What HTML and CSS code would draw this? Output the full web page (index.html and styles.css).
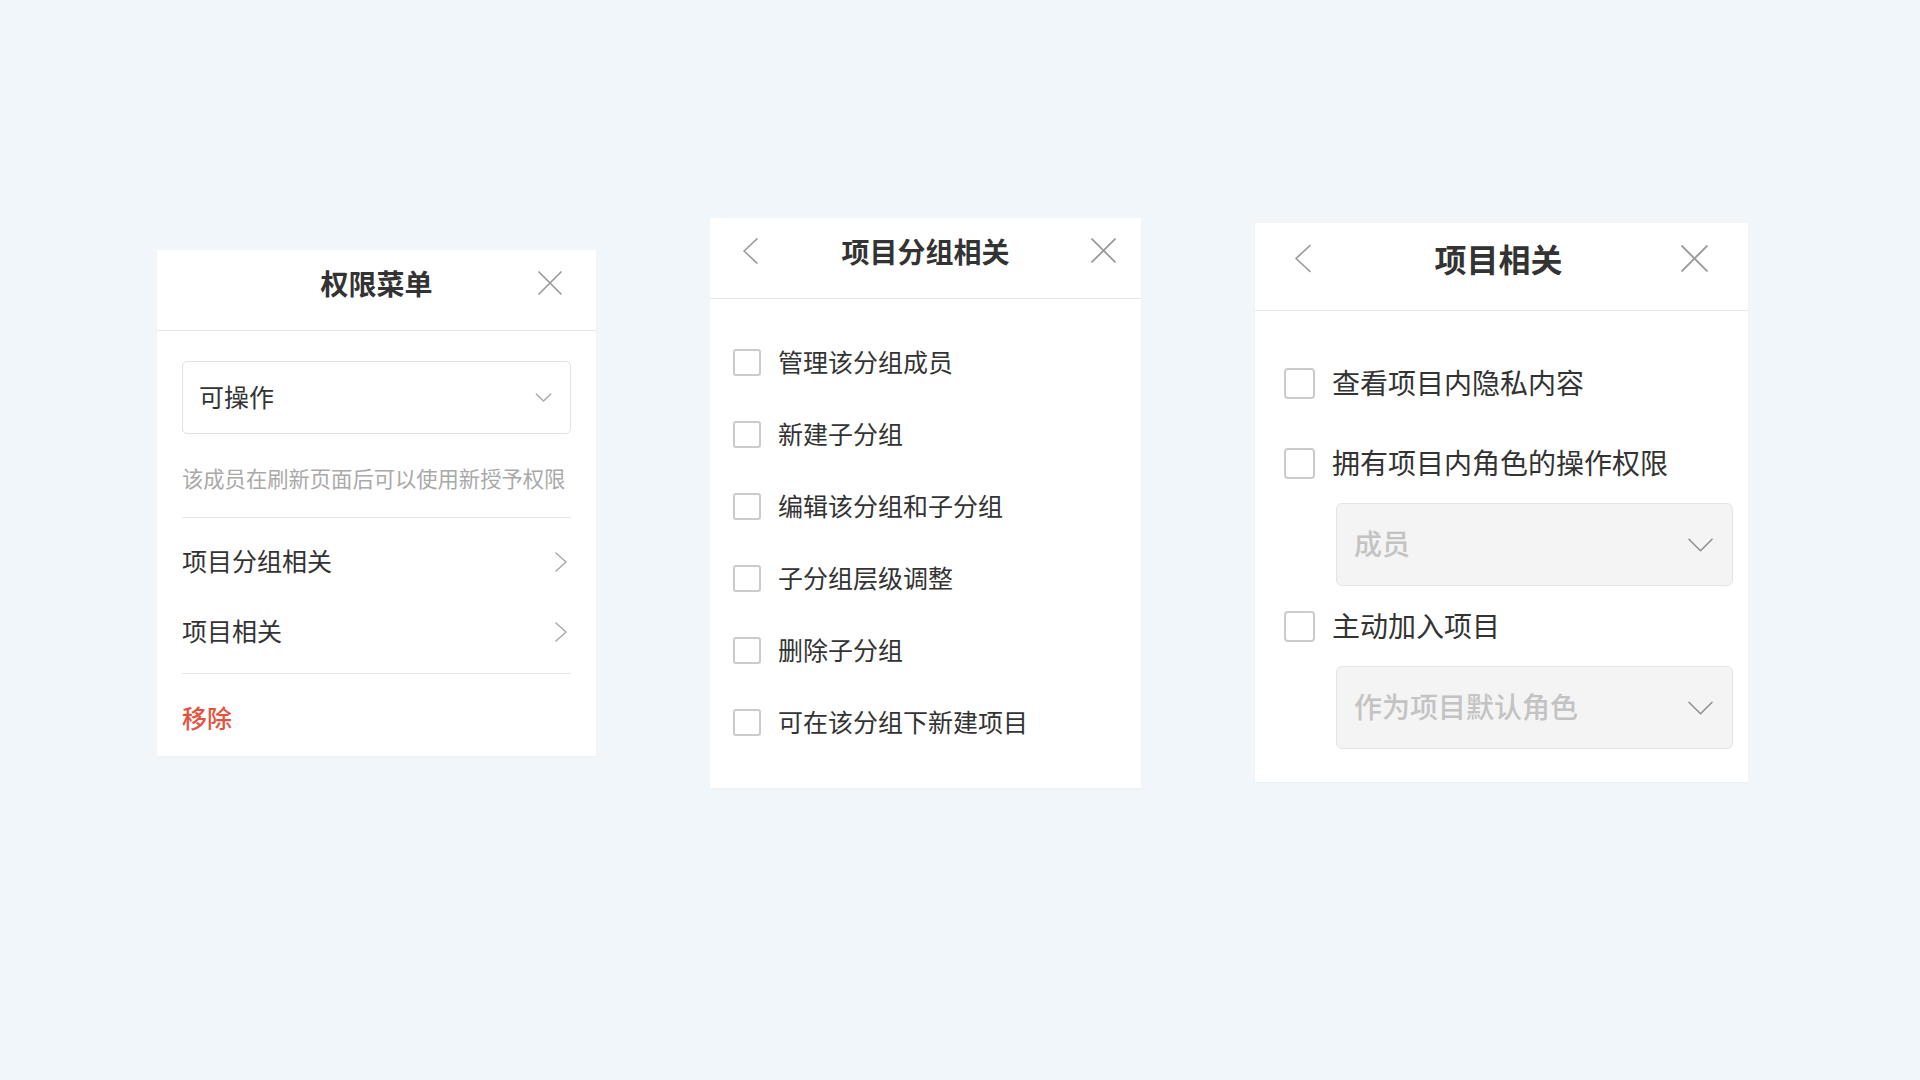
FILE: index.html
```html
<!DOCTYPE html>
<html lang="zh-CN">
<head>
<meta charset="utf-8">
<title>权限菜单</title>
<link rel="stylesheet" href="styles.css">
</head>
<body>
<main class="canvas">

  <section class="panel panel-menu">
    <header class="panel-head">
      <span class="head-left"></span>
      <h2 class="panel-title">权限菜单</h2>
      <span class="head-right">
        <svg class="icon-close" viewBox="0 0 24 24"><path d="M1 1 L23 23 M23 1 L1 23"/></svg>
      </span>
    </header>
    <div class="menu-body">
      <div class="select">
        <span class="select-text">可操作</span>
        <svg class="icon-down" viewBox="0 0 18 10"><polyline points="1,1 9,9 17,1"/></svg>
      </div>
      <p class="hint">该成员在刷新页面后可以使用新授予权限</p>
      <ul class="menu-list">
        <li class="menu-item"><span class="label">项目分组相关</span><svg class="icon-right" viewBox="0 0 12 20"><polyline points="1,1 11,10 1,19"/></svg></li>
        <li class="menu-item"><span class="label">项目相关</span><svg class="icon-right" viewBox="0 0 12 20"><polyline points="1,1 11,10 1,19"/></svg></li>
      </ul>
      <div class="remove">移除</div>
    </div>
  </section>

  <section class="panel panel-group">
    <header class="panel-head">
      <span class="head-left">
        <svg class="icon-back" viewBox="0 0 16 28"><polyline points="15,1 1,14 15,27"/></svg>
      </span>
      <h2 class="panel-title">项目分组相关</h2>
      <span class="head-right">
        <svg class="icon-close" viewBox="0 0 24 24"><path d="M1 1 L23 23 M23 1 L1 23"/></svg>
      </span>
    </header>
    <ul class="check-list">
      <li class="check-row"><span class="checkbox"></span><span class="label">管理该分组成员</span></li>
      <li class="check-row"><span class="checkbox"></span><span class="label">新建子分组</span></li>
      <li class="check-row"><span class="checkbox"></span><span class="label">编辑该分组和子分组</span></li>
      <li class="check-row"><span class="checkbox"></span><span class="label">子分组层级调整</span></li>
      <li class="check-row"><span class="checkbox"></span><span class="label">删除子分组</span></li>
      <li class="check-row"><span class="checkbox"></span><span class="label">可在该分组下新建项目</span></li>
    </ul>
  </section>

  <section class="panel panel-project">
    <header class="panel-head">
      <span class="head-left">
        <svg class="icon-back" viewBox="0 0 16 28"><polyline points="15,1 1,14 15,27"/></svg>
      </span>
      <h2 class="panel-title">项目相关</h2>
      <span class="head-right">
        <svg class="icon-close" viewBox="0 0 24 24"><path d="M1 1 L23 23 M23 1 L1 23"/></svg>
      </span>
    </header>
    <div class="check-list">
      <div class="check-row"><span class="checkbox"></span><span class="label">查看项目内隐私内容</span></div>
      <div class="check-row"><span class="checkbox"></span><span class="label">拥有项目内角色的操作权限</span></div>
      <div class="select select-disabled">
        <span class="select-text">成员</span>
        <svg class="icon-down" viewBox="0 0 26 14"><polyline points="1,1 13,13 25,1"/></svg>
      </div>
      <div class="check-row"><span class="checkbox"></span><span class="label">主动加入项目</span></div>
      <div class="select select-disabled">
        <span class="select-text">作为项目默认角色</span>
        <svg class="icon-down" viewBox="0 0 26 14"><polyline points="1,1 13,13 25,1"/></svg>
      </div>
    </div>
  </section>

</main>
</body>
</html>
```

FILE: styles.css
```css
* {
  box-sizing: border-box;
}

html, body {
  margin: 0;
  padding: 0;
}

body {
  width: 1920px;
  height: 1080px;
  background: #f1f6fa;
  font-family: "Noto Sans CJK SC", "Noto Sans", sans-serif;
  color: #333333;
  overflow: hidden;
}

.canvas {
  height: 1080px;
  display: flex;
  align-items: center;
  gap: 114px;
  padding: 0 0 75px 157px;
}

.panel {
  background: #ffffff;
  box-shadow: 0 1px 2px rgba(0, 0, 0, 0.03);
  flex: none;
}

.label {
  padding-bottom: 3px;
}

/* ---------- header ---------- */
.panel-head {
  display: grid;
  grid-template-columns: 1fr auto 1fr;
  align-items: center;
  border-bottom: 1px solid #e6e6e6;
}

.panel-title {
  margin: 0;
  font-weight: 700;
  color: #333333;
  line-height: 1;
  white-space: nowrap;
}

.head-left,
.head-right {
  display: flex;
  align-items: center;
}

.head-left {
  justify-self: start;
}

.head-right {
  justify-self: end;
}

.icon-close,
.icon-back,
.icon-down,
.icon-right {
  display: block;
  fill: none;
  stroke-linecap: round;
  stroke-linejoin: round;
}

.icon-close {
  stroke: #9a9a9a;
  stroke-width: 1.7;
}

.icon-back {
  stroke: #9a9a9a;
  stroke-width: 1.7;
}

/* ---------- panel 1 ---------- */
.panel-menu {
  width: 439px;
}

.panel-menu .panel-head {
  height: 81px;
  padding-bottom: 14px;
}

.panel-menu .panel-title {
  font-size: 28px;
}

.panel-menu .head-right {
  margin-right: 34px;
}

.panel-menu .icon-close {
  width: 24px;
  height: 24px;
}

.menu-body {
  padding: 30px 25px 24px;
}

.select {
  display: flex;
  align-items: center;
  justify-content: space-between;
  border: 1px solid #e2e2e2;
  border-radius: 5px;
  background: #ffffff;
}

.panel-menu .select {
  height: 73px;
  padding: 0 18px 0 16px;
}

.panel-menu .select-text {
  font-size: 25px;
  color: #333333;
  padding-bottom: 3px;
}

.panel-menu .icon-down {
  width: 17px;
  height: 9px;
  stroke: #a8a8a8;
  stroke-width: 1.5;
}

.hint {
  margin: 29px 0 24px;
  font-size: 21.3px;
  line-height: 30px;
  color: #a9a9a9;
  white-space: nowrap;
}

.menu-list {
  list-style: none;
  margin: 0;
  padding: 9px 0 6px;
  border-top: 1px solid #e6e6e6;
  border-bottom: 1px solid #e6e6e6;
}

.menu-item {
  height: 70px;
  display: flex;
  align-items: center;
  justify-content: space-between;
  font-size: 25px;
  color: #333333;
}

.icon-right {
  width: 12px;
  height: 20px;
  margin-right: 4px;
  stroke: #a8a8a8;
  stroke-width: 1.5;
}

.remove {
  padding-top: 28px;
  font-size: 25px;
  line-height: 30px;
  font-weight: 500;
  color: #e4513d;
}

/* ---------- panel 2 ---------- */
.panel-group {
  width: 431px;
}

.panel-group .panel-head {
  height: 81px;
  padding-bottom: 14px;
}

.panel-group .panel-title {
  font-size: 28px;
}

.panel-group .head-left {
  margin-left: 33px;
}

.panel-group .head-right {
  margin-right: 25px;
}

.panel-group .icon-back {
  width: 15px;
  height: 26px;
}

.panel-group .icon-close {
  width: 25px;
  height: 25px;
}

.check-list {
  list-style: none;
  margin: 0;
}

.panel-group .check-list {
  padding: 28px 23px 29px;
}

.check-row {
  display: flex;
  align-items: center;
  color: #333333;
  white-space: nowrap;
}

.checkbox {
  flex: none;
  border: 2px solid #cbcbcb;
  border-radius: 3px;
  background: #ffffff;
}

.panel-group .check-row {
  height: 72px;
  gap: 17px;
  font-size: 25px;
}

.panel-group .checkbox {
  width: 28px;
  height: 27px;
}

/* ---------- panel 3 ---------- */
.panel-project {
  width: 493px;
}

.panel-project .panel-head {
  height: 88px;
  padding-bottom: 17px;
}

.panel-project .panel-title {
  font-size: 32px;
  margin-right: 6px;
}

.panel-project .head-left {
  margin-left: 40px;
}

.panel-project .head-right {
  margin-right: 40px;
}

.panel-project .icon-back {
  width: 16px;
  height: 29px;
}

.panel-project .icon-close {
  width: 27px;
  height: 27px;
}

.panel-project .check-list {
  padding: 32px 15px 33px 29px;
}

.panel-project .check-row {
  height: 80px;
  gap: 17px;
  font-size: 28px;
}

.panel-project .checkbox {
  width: 31px;
  height: 31px;
  border-radius: 4px;
}

.select-disabled {
  margin-left: 52px;
  height: 83px;
  padding: 0 19px 0 17px;
  background: #f4f4f4;
  border: 1px solid #e4e4e4;
  border-radius: 6px;
}

.select-disabled .select-text {
  font-size: 28px;
  font-weight: 500;
  color: #c3c3c3;
  white-space: nowrap;
  padding-bottom: 3px;
}

.select-disabled .icon-down {
  width: 25px;
  height: 14px;
  stroke: #8f8f8f;
  stroke-width: 1.6;
}
```
